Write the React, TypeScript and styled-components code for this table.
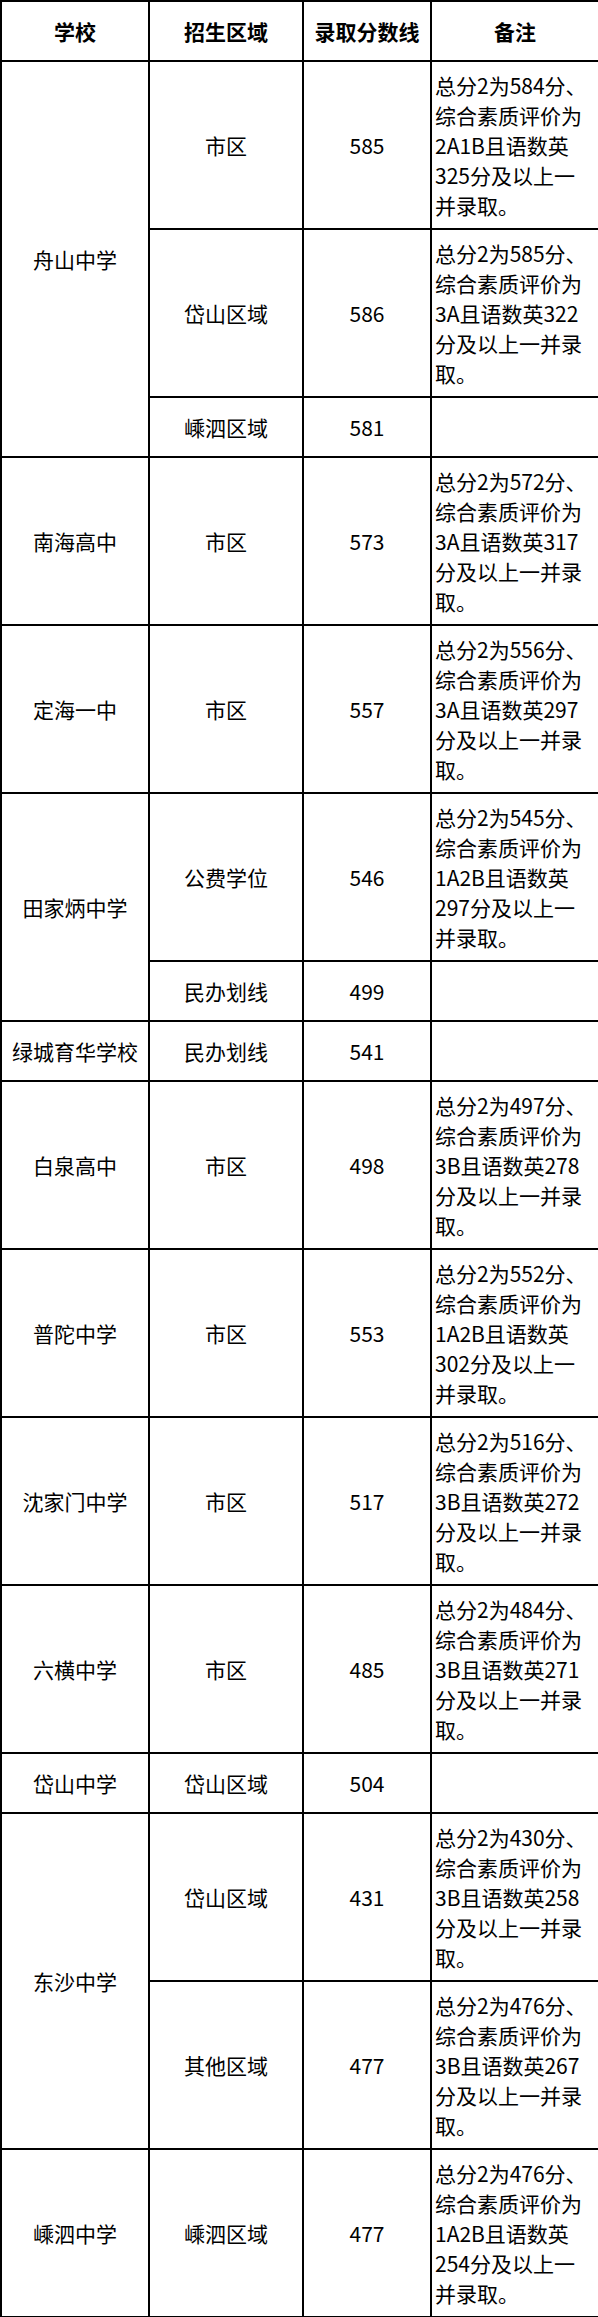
import React from 'react';
import styled, { createGlobalStyle } from 'styled-components';

const GlobalStyle = createGlobalStyle`
  html, body {
    margin: 0;
    padding: 0;
    background: #fff;
  }
  body {
    font-family: "Noto Sans CJK SC", "Noto Sans", sans-serif;
    color: #000;
  }
`;

interface CellProps {
  tall?: boolean
}

const Table = styled.table`
  width: 598px;
  table-layout: fixed;
  border-collapse: collapse;
  font-size: 21px;
  line-height: 30px;
`;

const HeadCell = styled.th`
  height: 58px;
  padding: 0;
  border: 2px solid #000;
  font-weight: bold;
  text-align: center;
  vertical-align: middle;
  white-space: nowrap;
`;

const Cell = styled.td<CellProps>`
  height: ${({ tall }) => (tall ? '166px' : '58px')};
  padding: 0;
  border: 2px solid #000;
  text-align: center;
  vertical-align: middle;
  white-space: nowrap;
`;

const NoteCell = styled(Cell)`
  text-align: left;
  padding-left: 3px;
`;

const NoteLine = styled.span`
  display: block;
`;

interface Entry {
  area: string
  score: string
  note?: string[]
}

interface School {
  name: string
  entries: Entry[]
}

const noteLines = (total: string, grade: string, main: string): string[] => {
  const first = [`总分2为${total}分、`, '综合素质评价为'];
  if (grade.length > 2) {
    return [...first, `${grade}且语数英`, `${main}分及以上一`, '并录取。'];
  }
  return [...first, `${grade}且语数英${main}`, '分及以上一并录', '取。'];
};

const schools: School[] = [
  {
    name: '舟山中学',
    entries: [
      { area: '市区', score: '585', note: noteLines('584', '2A1B', '325') },
      { area: '岱山区域', score: '586', note: noteLines('585', '3A', '322') },
      { area: '嵊泗区域', score: '581' },
    ],
  },
  { name: '南海高中', entries: [{ area: '市区', score: '573', note: noteLines('572', '3A', '317') }] },
  { name: '定海一中', entries: [{ area: '市区', score: '557', note: noteLines('556', '3A', '297') }] },
  {
    name: '田家炳中学',
    entries: [
      { area: '公费学位', score: '546', note: noteLines('545', '1A2B', '297') },
      { area: '民办划线', score: '499' },
    ],
  },
  { name: '绿城育华学校', entries: [{ area: '民办划线', score: '541' }] },
  { name: '白泉高中', entries: [{ area: '市区', score: '498', note: noteLines('497', '3B', '278') }] },
  { name: '普陀中学', entries: [{ area: '市区', score: '553', note: noteLines('552', '1A2B', '302') }] },
  { name: '沈家门中学', entries: [{ area: '市区', score: '517', note: noteLines('516', '3B', '272') }] },
  { name: '六横中学', entries: [{ area: '市区', score: '485', note: noteLines('484', '3B', '271') }] },
  { name: '岱山中学', entries: [{ area: '岱山区域', score: '504' }] },
  {
    name: '东沙中学',
    entries: [
      { area: '岱山区域', score: '431', note: noteLines('430', '3B', '258') },
      { area: '其他区域', score: '477', note: noteLines('476', '3B', '267') },
    ],
  },
  { name: '嵊泗中学', entries: [{ area: '嵊泗区域', score: '477', note: noteLines('476', '1A2B', '254') }] },
];

export default function App() {
  return (
    <>
      <GlobalStyle />
      <Table>
        <colgroup>
          <col style={{ width: 148 }} />
          <col style={{ width: 154 }} />
          <col style={{ width: 128 }} />
          <col style={{ width: 168 }} />
        </colgroup>
        <thead>
          <tr>
            <HeadCell>学校</HeadCell>
            <HeadCell>招生区域</HeadCell>
            <HeadCell>录取分数线</HeadCell>
            <HeadCell>备注</HeadCell>
          </tr>
        </thead>
        <tbody>
          {schools.map((school) =>
            school.entries.map((entry, i) => {
              const tall = !!entry.note;
              return (
                <tr key={school.name + entry.area}>
                  {i === 0 && (
                    <Cell rowSpan={school.entries.length}>{school.name}</Cell>
                  )}
                  <Cell tall={tall}>{entry.area}</Cell>
                  <Cell tall={tall}>{entry.score}</Cell>
                  <NoteCell tall={tall}>
                    {entry.note?.map((line) => (
                      <NoteLine key={line}>{line}</NoteLine>
                    ))}
                  </NoteCell>
                </tr>
              );
            })
          )}
        </tbody>
      </Table>
    </>
  );
}
